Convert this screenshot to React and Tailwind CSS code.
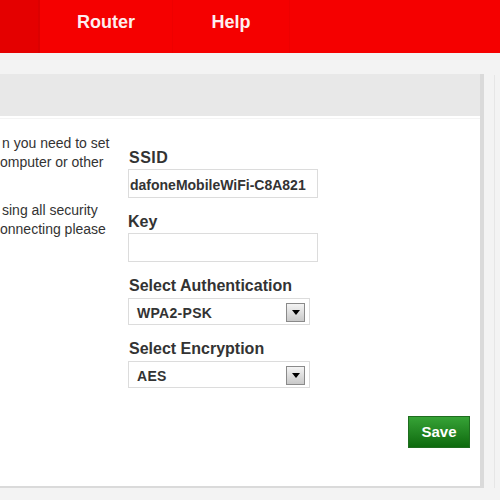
import React from 'react';

const font = { fontFamily: '"Liberation Sans", Arial, sans-serif' };

const Arrow = () => (
  <span className="absolute right-[4px] top-[4px] w-[19px] h-[19px] border border-[#8a8a8a] bg-gradient-to-b from-[#f4f4f4] to-[#c9c9c9] flex items-center justify-center">
    <svg width="8" height="5" viewBox="0 0 8 5">
      <path d="M0 0 L8 0 L4 5 Z" fill="#000" />
    </svg>
  </span>
);

const SelectBox = ({ value }) => (
  <div className="relative w-[182px] h-[27px] border border-[#dcdcdc] bg-white">
    <span className="absolute left-[8px] top-[4px] text-[14px] font-bold text-[#333] tracking-[0.3px]">{value}</span>
    <Arrow />
  </div>
);

const App = () => {
  return (
    <div className="w-[500px] h-[500px] overflow-hidden bg-[#f3f3f3]" style={font}>
      {/* top nav */}
      <div className="flex h-[53px] bg-[#f50000]">
        <div className="w-[40px] bg-[#e40000] border-r-2 border-[#dc0000]" />
        <div className="w-[133px] flex justify-center pt-[9px] text-[18px] font-bold text-[#fdeeee] border-r border-[#ee0000]">
          Router
        </div>
        <div className="w-[117px] flex justify-center pt-[9px] text-[18px] font-bold text-[#fdeeee] border-r border-[#ee0000]">
          Help
        </div>
        <div className="flex-1" />
      </div>

      <div className="flex pt-[21px]">
        <div className="w-[484px] bg-white border-r-4 border-[#dadada] border-b-2">
          <div className="h-[44px] bg-[#e8e8e8] border-b-2 border-white" />
          <div className="h-[367px] flex border-t border-[#f4f4f4]">
            <div className="w-[128px] pt-[15px] text-[14px] leading-[19px] text-[#333] whitespace-nowrap">
              <div className="pl-[2px]">n you need to set</div>
              <div>omputer or other</div>
              <div className="mt-[29px] pl-[2px]">sing all security</div>
              <div>onnecting please</div>
            </div>
            <div className="flex-1 pt-[29px] relative">
              <div className="text-[16px] leading-[19px] font-bold text-[#333] pl-[1px] tracking-[0.5px]">SSID</div>
              <div className="mt-[2px] w-[190px] h-[29px] border border-[#dcdcdc] overflow-hidden whitespace-nowrap text-[14px] font-bold text-[#333] pl-[1px] pt-[5px]">
                dafoneMobileWiFi-C8A821
              </div>
              <div className="mt-[14px] text-[16px] leading-[19px] font-bold text-[#333]">Key</div>
              <div className="mt-[2px] w-[190px] h-[29px] border border-[#dcdcdc]" />
              <div className="mt-[14px] text-[16px] leading-[19px] font-bold text-[#333] pl-[1px]">Select Authentication</div>
              <div className="mt-[3px]"><SelectBox value="WPA2-PSK" /></div>
              <div className="mt-[14px] text-[16px] leading-[19px] font-bold text-[#333] pl-[1px]">Select Encryption</div>
              <div className="mt-[3px]"><SelectBox value="AES" /></div>
              <div className="flex justify-end pr-[10px] mt-[28px]">
                <button className="w-[62px] h-[32px] border border-[#1f6d1f] bg-gradient-to-b from-[#36a336] to-[#0d6a0d] text-white font-bold text-[15px]">
                  Save
                </button>
              </div>
            </div>
          </div>
        </div>
        <div className="w-[10px]" />
        <div className="flex-1 mt-[1px] border-l border-[#e6e6e6] h-[413px]" />
      </div>
    </div>
  );
};

export default App;
